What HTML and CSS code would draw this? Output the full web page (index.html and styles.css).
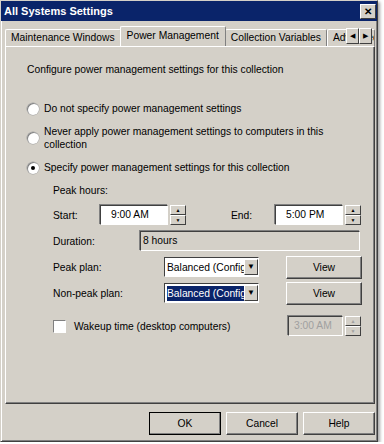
FILE: index.html
```html
<!DOCTYPE html>
<html lang="en">
<head>
    <meta charset="UTF-8">
    <title>All Systems Settings</title>
    <link rel="stylesheet" href="styles.css">
</head>
<body>
    <div class="window">
        <div class="titlebar">
            <span class="title">All Systems Settings</span>
            <span class="close">&#x2715;</span>
        </div>

        <div class="content">
            <!-- tab strip -->
            <div class="tabs">
                <div class="tab">Maintenance Windows</div>
                <div class="tab active">Power Management</div>
                <div class="tab">Collection Variables</div>
                <div class="tab clipped">Advanced</div>
                <div class="tab-scroll">
                    <span class="arrow">&#9664;</span>
                    <span class="arrow">&#9654;</span>
                </div>
            </div>

            <div class="panel">
                <p class="intro">Configure power management settings for this collection</p>

                <label class="radio-row">
                    <span class="radio"></span>
                    <span>Do not specify power management settings</span>
                </label>
                <label class="radio-row">
                    <span class="radio"></span>
                    <span>Never apply power management settings to computers in this collection</span>
                </label>
                <label class="radio-row last">
                    <span class="radio checked"></span>
                    <span>Specify power management settings for this collection</span>
                </label>

                <div class="settings">
                    <div class="row peak">Peak hours:</div>

                    <div class="row">
                        <span class="lbl lbl-start">Start:</span>
                        <div class="spin">
                            <span class="field">9:00 AM</span>
                            <span class="spin-btns"><i>&#9650;</i><i>&#9660;</i></span>
                        </div>
                        <span class="lbl lbl-end">End:</span>
                        <div class="spin">
                            <span class="field">5:00 PM</span>
                            <span class="spin-btns"><i>&#9650;</i><i>&#9660;</i></span>
                        </div>
                    </div>

                    <div class="row">
                        <span class="lbl lbl-dur">Duration:</span>
                        <span class="field readonly">8 hours</span>
                    </div>

                    <div class="row">
                        <span class="lbl lbl-plan">Peak plan:</span>
                        <div class="combo">
                            <span class="combo-text">Balanced (Configuration Manager)</span>
                            <span class="drop">&#9660;</span>
                        </div>
                        <button class="btn view">View</button>
                    </div>

                    <div class="row">
                        <span class="lbl lbl-plan">Non-peak plan:</span>
                        <div class="combo">
                            <span class="combo-text selected">Balanced (Configuration Manager)</span>
                            <span class="drop">&#9660;</span>
                        </div>
                        <button class="btn view">View</button>
                    </div>

                    <div class="row wake">
                        <span class="checkbox"></span>
                        <span class="lbl lbl-wake">Wakeup time (desktop computers)</span>
                        <div class="spin disabled">
                            <span class="field">3:00 AM</span>
                            <span class="spin-btns"><i>&#9650;</i><i>&#9660;</i></span>
                        </div>
                    </div>
                </div>
            </div>

            <div class="buttons">
                <button class="btn">OK</button>
                <button class="btn">Cancel</button>
                <button class="btn">Help</button>
            </div>
        </div>
    </div>
</body>
</html>
```

FILE: styles.css
```css
body { margin: 0; background: #ffffff; font-family: Tahoma, "Liberation Sans", Arial, sans-serif; font-size: 10.3px; color: #000; }

.window {
    width: 376px;
    height: 440px;
    background: #d4d0c8;
    border: 1px solid #404040;
    border-top-color: #d4d0c8;
    border-left-color: #d4d0c8;
    box-shadow: inset 1px 1px 0 #ffffff, inset -1px -1px 0 #808080, 2px 2px 3px rgba(0,0,0,0.35);
    display: flex;
    flex-direction: column;
}

.titlebar {
    height: 20px;
    background: #0a246a;
    display: flex;
    align-items: center;
    justify-content: space-between;
    padding: 0 1px 0 3px;
}
.title { color: #fff; font-weight: bold; font-size: 11px; }
.close {
    width: 14px;
    height: 13px;
    background: #d4d0c8;
    border: 1px solid #404040;
    border-top-color: #fff;
    border-left-color: #fff;
    font-size: 10px;
    font-weight: bold;
    line-height: 13px;
    text-align: center;
}

.content { flex: 1; padding: 5px 2px 0 4px; display: flex; flex-direction: column; }

/* tab strip */
.tabs { display: flex; align-items: flex-end; height: 20px; position: relative; overflow: hidden; }
.tab {
    height: 16px;
    line-height: 16px;
    padding: 0 5px;
    border: 1px solid #808080;
    border-top-color: #fff;
    border-left-color: #fff;
    border-bottom: none;
    border-radius: 2px 2px 0 0;
    white-space: nowrap;
}
.tab.active { height: 19px; line-height: 18px; margin: 0 -1px; position: relative; z-index: 1; padding: 0 6px; }
.tab.clipped { flex: 1; overflow: hidden; }
.tab-scroll { position: absolute; right: 3px; top: 2px; display: flex; background: #d4d0c8; }
.arrow {
    width: 11px;
    height: 14px;
    border: 1px solid #404040;
    border-top-color: #fff;
    border-left-color: #fff;
    font-size: 7px;
    line-height: 14px;
    text-align: center;
}

.panel {
    height: 356px;
    border: 1px solid #404040;
    border-top-color: #fff;
    border-left-color: #fff;
    box-shadow: inset -1px -1px 0 #808080;
    padding: 0 12px 0 21px;
}

.intro { margin: 17px 0 27px 0; }

.radio-row { display: flex; align-items: center; gap: 5px; margin-bottom: 10px; width: 300px; line-height: 13px; }
.radio-row.last { margin-bottom: 8px; }
.radio {
    flex: none;
    width: 12px;
    height: 12px;
    border-radius: 50%;
    background: #fff;
    box-shadow: inset 1px 1px 0 #808080, 0 0 0 0.5px #a0a0a0;
    position: relative;
}
.radio.checked::after {
    content: '';
    position: absolute;
    left: 4px;
    top: 4px;
    width: 4px;
    height: 4px;
    border-radius: 50%;
    background: #000;
}

.settings { padding-left: 26px; }
.row { display: flex; align-items: center; height: 26px; }
.row.peak { height: 17px; margin-bottom: 3px; }

.lbl-start { width: 47px; }
.lbl-end { width: 44px; margin-left: 45px; }
.lbl-dur { width: 87px; }
.lbl-plan { width: 111px; }
.lbl-wake { width: 214px; margin-left: 8px; white-space: nowrap; }

.field {
    height: 18px;
    line-height: 18px;
    background: #fff;
    border: 1px solid #fff;
    border-top-color: #404040;
    border-left-color: #404040;
    box-shadow: -1px -1px 0 #808080;
    padding: 0 5px;
    box-sizing: border-box;
    white-space: nowrap;
}
.spin { display: flex; align-items: center; gap: 2px; }
.spin .field { width: 68px; height: 20px; line-height: 18px; padding-left: 10px; }
.spin-btns { display: flex; flex-direction: column; }
.spin-btns i {
    font-style: normal;
    width: 14px;
    height: 8px;
    font-size: 5px;
    line-height: 8px;
    text-align: center;
    border: 1px solid #404040;
    border-top-color: #fff;
    border-left-color: #fff;
}
.spin.disabled .field { background: #d4d0c8; color: #a0a0a0; width: 55px; padding-left: 5px; }
.spin.disabled .spin-btns i { color: #a0a0a0; }

.field.readonly { width: 220px; height: 20px; background: #d4d0c8; padding-left: 2px; }

.combo {
    width: 95px;
    height: 20px;
    box-sizing: border-box;
    background: #fff;
    border: 1px solid #fff;
    border-top-color: #404040;
    border-left-color: #404040;
    display: flex;
    align-items: center;
    padding-left: 2px;
}
.combo-text { flex: 1; overflow: hidden; white-space: nowrap; line-height: 15px; }
.combo-text.selected { background: #0a246a; color: #fff; }
.drop {
    flex: none;
    width: 14px;
    height: 16px;
    background: #d4d0c8;
    border: 1px solid #404040;
    border-top-color: #fff;
    border-left-color: #fff;
    box-sizing: border-box;
    font-size: 8px;
    line-height: 14px;
    text-align: center;
}

.btn {
    font: inherit;
    width: 72px;
    height: 23px;
    background: #d4d0c8;
    border: 1px solid #404040;
    border-top-color: #fff;
    border-left-color: #fff;
    box-shadow: inset -1px -1px 0 #808080;
    padding: 0;
}
.btn.view { width: 76px; margin-left: 27px; }

.checkbox {
    width: 11px;
    height: 11px;
    background: #fff;
    border: 1px solid #fff;
    border-top-color: #808080;
    border-left-color: #808080;
}
.row.wake { margin-top: 7px; }

.buttons { display: flex; justify-content: flex-end; gap: 5px; margin-top: 8px; }
.buttons .btn:first-child { border-color: #000; }
```
